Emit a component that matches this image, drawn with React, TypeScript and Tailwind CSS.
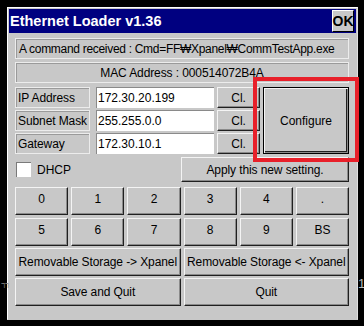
import React from "react";

const btn =
  "bg-[#c8c8c8] border-t border-l border-t-[#f4f4f4] border-l-[#f4f4f4] border-b border-r border-b-[#202020] border-r-[#202020] shadow-[inset_-1px_-1px_0_#8a8a8a] flex items-center justify-center text-[12px] text-black whitespace-nowrap tracking-[-0.1px]";

const label =
  "bg-[#c8c8c8] border border-[#ececec] shadow-[inset_1px_1px_0_#9a9a9a] flex items-center text-[12px] text-black whitespace-nowrap tracking-[-0.1px]";

function Row({ name, value }: { name: string; value: string }) {
  return (
    <div className="flex h-[21px] gap-[3px]">
      <div className={label + " w-[75px] pl-[2px] mr-[3px] overflow-hidden"}>{name}</div>
      <div className="w-[118px] bg-white border-t border-l border-[#8a8a8a] flex items-center pl-[1px] text-[12px] text-black whitespace-nowrap">
        {value}
      </div>
      <div className={btn + " w-[43px]"}>Cl.</div>
    </div>
  );
}

export default function App() {
  const keys = ["0", "1", "2", "3", "4", ".", "5", "6", "7", "8", "9", "BS"];
  return (
    <div
      className="relative w-[364px] h-[326px] bg-black overflow-hidden pl-[7px] pt-[7px]"
      style={{ fontFamily: '"Liberation Sans", Arial, sans-serif' }}
    >
      <div className="w-[351px] h-[313px] bg-[#c8c8c8] border-t border-l border-white border-r border-b border-r-[#e0e0e0] border-b-[#c8c8c8] p-px flex flex-col">
        <div className="h-[24px] bg-[#000080] flex items-center justify-between pl-[1px] pr-[2px]">
          <span className="text-white font-bold text-[14.5px] leading-none">
            Ethernet Loader v1.36
          </span>
          <div className="w-[22px] h-[22px] bg-[#c8c8c8] border-t border-l border-white border-b border-r border-b-black border-r-black flex items-center justify-center font-bold text-[14px] text-black">
            OK
          </div>
        </div>
        <div className="flex flex-col pl-[6px] pr-[7px] pt-[5px]">
          <div className={label + " h-[21px] pl-[3px] tracking-[-0.3px] overflow-hidden"}>
            A command received : Cmd=FF₩Xpanel₩CommTestApp.exe
          </div>
          <div className={label + " h-[21px] mt-[3px] justify-center"}>
            MAC Address : 000514072B4A
          </div>
          <div className="flex mt-[4px] gap-[3px]">
            <div className="flex flex-col gap-[2px]">
              <Row name="IP Address" value="172.30.20.199" />
              <Row name="Subnet Mask" value="255.255.0.0" />
              <Row name="Gateway" value="172.30.10.1" />
            </div>
            <div className="w-[86px] h-[67px] bg-[#c8c8c8] border border-black shadow-[inset_1px_1px_0_#f4f4f4,inset_-1px_-1px_0_#8a8a8a,inset_-2px_-2px_0_#202020] flex items-center justify-center text-[12px] text-black">
              Configure
            </div>
          </div>
          <div className="flex mt-[3px] h-[25px] items-center">
            <div className="w-[166px] flex items-center pl-[1px]">
              <div className="w-[15px] h-[15px] bg-white border-t border-l border-[#7a7a7a]" />
              <span className="ml-[6px] text-[12px] text-black">DHCP</span>
            </div>
            <div className={btn + " w-[168px] h-[25px]"}>Apply this new setting.</div>
          </div>
          <div className="grid grid-cols-6 gap-x-[3px] gap-y-[3px] mt-[5px]">
            {keys.map((k) => (
              <div
                key={k}
                className={btn + " h-[28px] items-start pt-[2px] border-l-[#303030]"}
              >
                {k}
              </div>
            ))}
          </div>
          <div className="grid grid-cols-2 gap-[3px] mt-[2px]">
            <div className={btn + " h-[28px]"}>Removable Storage -&gt; Xpanel</div>
            <div className={btn + " h-[28px]"}>Removable Storage &lt;- Xpanel</div>
          </div>
          <div className="grid grid-cols-2 gap-[3px] mt-[2px]">
            <div className={btn + " h-[28px]"}>Save and Quit</div>
            <div className={btn + " h-[28px]"}>Quit</div>
          </div>
        </div>
      </div>
      <div className="absolute left-[253px] top-[77px] w-[106px] h-[85px] border-[4px] border-[#e8202a]" />
      <div className="absolute left-[358px] top-[277px] text-[13px] text-[#bbbbbb] leading-none">1</div>
      <div className="absolute left-0 top-[281px] text-[10px] text-[#888888] leading-none">ㄲ</div>
    </div>
  );
}
